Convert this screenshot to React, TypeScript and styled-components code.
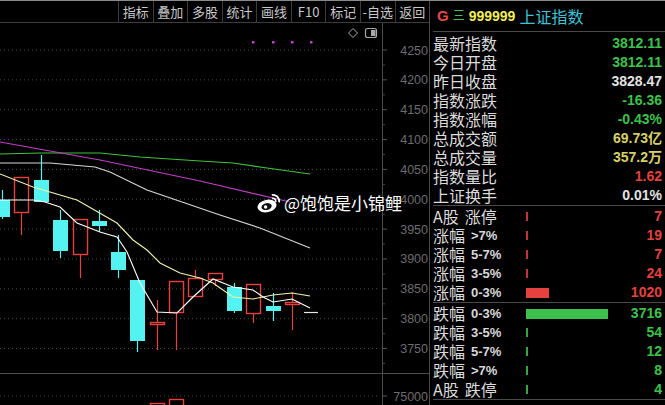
import React from 'react';
import styled, { createGlobalStyle } from 'styled-components';

const GlobalStyle = createGlobalStyle`
  html, body {
    margin: 0;
    padding: 0;
    background: #000;
  }
  body {
    font-family: "Noto Sans CJK SC", "Liberation Sans", sans-serif;
  }
`;

const Screen = styled.div`
  width: 665px;
  height: 405px;
  display: flex;
  background: #000;
  border-top: 1px solid #8a8a8a;
  box-sizing: border-box;
  overflow: hidden;
`;

const LeftPane = styled.div`
  width: 429px;
  display: flex;
  flex-direction: column;
`;

const Toolbar = styled.div`
  height: 22px;
  display: flex;
  justify-content: flex-end;
  border-bottom: 1px solid #3c3c3c;
  box-sizing: border-box;
`;

const ToolGroup = styled.div`
  width: 311px;
  display: flex;
`;

const ToolButton = styled.div`
  flex: 1;
  display: flex;
  align-items: center;
  justify-content: center;
  border-left: 1px solid #3c3c3c;
  color: #c8c8c8;
  font-size: 13px;
  line-height: 21px;
  white-space: nowrap;
`;

const ChartArea = styled.div`
  position: relative;
  flex: 1;
`;

const Watermark = styled.div`
  position: absolute;
  left: 257px;
  top: 169px;
  display: flex;
  align-items: center;
  gap: 3px;
  color: #fff;
  font-size: 17px;
  line-height: 22px;
  text-shadow: 0 0 2px #000;
`;

const RightPane = styled.div`
  flex: 1;
  border-left: 1px solid #4a4a4a;
  padding-left: 3px;
  display: flex;
  flex-direction: column;
`;

const Header = styled.div`
  height: 30px;
  border-bottom: 1px solid #4a4a4a;
  display: flex;
  align-items: center;
  padding-left: 4px;
  gap: 4px;
`;

const HeaderMark = styled.span<{ color: string; size: number; bold?: boolean }>`
  color: ${p => p.color};
  font-size: ${p => p.size}px;
  font-weight: ${p => (p.bold ? 700 : 400)};
  font-family: "Liberation Sans", "Noto Sans CJK SC", sans-serif;
  line-height: 20px;
`;

const HeaderName = styled.span`
  color: #3ec2d6;
  font-size: 16px;
  line-height: 20px;
`;

const Section = styled.div<{ top: number }>`
  padding-top: ${p => p.top}px;
  border-bottom: 1px solid #4a4a4a;
`;

const StatRow = styled.div`
  height: 19px;
  display: flex;
  align-items: center;
  justify-content: space-between;
  padding-right: 3px;
`;

const Label = styled.span`
  color: #dcdcdc;
  font-size: 16px;
  line-height: 19px;
  white-space: nowrap;
`;

const LabelGroup = styled.div`
  height: 19px;
  display: flex;
  align-items: center;
  gap: 6px;
`;

const Latin = styled.span`
  font-family: "Liberation Sans", sans-serif;
  font-weight: 700;
  font-size: 13px;
  line-height: 19px;
  color: #d8d8d8;
`;

const Value = styled.span<{ color: string }>`
  color: ${p => p.color};
  font-family: "Liberation Sans", "Noto Sans CJK SC", sans-serif;
  font-weight: 700;
  font-size: 14px;
  line-height: 19px;
  white-space: nowrap;
`;

const BreadthRow = styled.div`
  height: 19px;
  display: grid;
  grid-template-columns: 93px 1fr auto;
  grid-template-rows: 19px;
  align-items: center;
  padding-right: 3px;
`;

const Bar = styled.div<{ color: string }>`
  height: 10px;
  background: ${p => p.color};
`;

const Tick = styled.div<{ color: string }>`
  width: 1.5px;
  height: 9px;
  background: ${p => p.color};
  opacity: 0.85;
`;

const RED = '#e4413f';
const GREEN = '#3cc24c';
const WHITE = '#e2e2e2';
const YELLOW = '#d6cf6a';

const tools = ['指标', '叠加', '多股', '统计', '画线', 'F10', '标记', '-自选', '返回'];

const stats = [
  { label: '最新指数', value: '3812.11', color: GREEN },
  { label: '今日开盘', value: '3812.11', color: GREEN },
  { label: '昨日收盘', value: '3828.47', color: WHITE },
  { label: '指数涨跌', value: '-16.36', color: GREEN },
  { label: '指数涨幅', value: '-0.43%', color: GREEN },
  { label: '总成交额', value: '69.73亿', color: YELLOW },
  { label: '总成交量', value: '357.2万', color: YELLOW },
  { label: '指数量比', value: '1.62', color: RED },
  { label: '上证换手', value: '0.01%', color: WHITE },
];

const ups = [
  { head: 'A股', tail: '涨停', latin: false, value: 7 },
  { head: '涨幅', tail: '>7%', latin: true, value: 19 },
  { head: '涨幅', tail: '5-7%', latin: true, value: 7 },
  { head: '涨幅', tail: '3-5%', latin: true, value: 24 },
  { head: '涨幅', tail: '0-3%', latin: true, value: 1020 },
];

const downs = [
  { head: '跌幅', tail: '0-3%', latin: true, value: 3716 },
  { head: '跌幅', tail: '3-5%', latin: true, value: 54 },
  { head: '跌幅', tail: '5-7%', latin: true, value: 12 },
  { head: '跌幅', tail: '>7%', latin: true, value: 8 },
  { head: 'A股', tail: '跌停', latin: false, value: 4 },
];

const MAX_COUNT = 3716;
const BAR_MAX = 82;

// kind, left, bodyTop, bodyBottom, wickTop, wickBottom (page coords)
type Candle = [string, number, number, number, number, number];
const candles: Candle[] = [
  ['c', -5, 200, 217, 190, 219],
  ['r', 14, 177, 213, 177, 235],
  ['c', 34, 180, 202, 155, 202],
  ['c', 53, 220, 251, 210, 258],
  ['r', 73, 219, 255, 219, 278],
  ['c', 92, 221, 226, 210, 232],
  ['c', 111, 252, 270, 235, 278],
  ['c', 130, 280, 341, 280, 352],
  ['r', 150, 322, 325, 300, 350],
  ['r', 169, 281, 313, 281, 350],
  ['r', 188, 278, 297, 270, 297],
  ['r', 208, 273, 280, 273, 286],
  ['c', 227, 287, 311, 283, 313],
  ['r', 246, 284, 314, 284, 323],
  ['c', 266, 306, 311, 293, 321],
  ['r', 285, 302, 305, 292, 330],
];

const maLines = [
  { color: '#3fc23f', pts: '0,154 40,153 100,153 140,157 200,161 233,163 267,168 310,174' },
  { color: '#c23fc6', pts: '0,142 100,160 200,181 290,202' },
  { color: '#d6d6d6', pts: '0,163 50,163 95,167 110,172 147,190 220,215 260,228 310,248' },
  {
    color: '#f2f2b0',
    pts: '0,174 33,187 77,200 117,223 133,240 147,250 160,263 180,273 200,278 213,283 233,297 253,299 273,295 292,293 310,296',
  },
  {
    color: '#ffffff',
    pts: '0,200 33,200 45,202 60,207 77,223 100,232 117,237 127,252 140,283 157,312 177,313 193,297 213,279 233,287 253,290 263,297 273,302 292,299 310,308',
  },
];

const priceY = (p: number) => 50 + (4250 - p) * 0.597;
const prices = [4250, 4200, 4150, 4100, 4050, 4000, 3950, 3900, 3850, 3800, 3750];

function CandleMark({ c }: { c: Candle }) {
  const [kind, left, bt, bb, wt, wb] = c;
  const w = 14;
  const cx = left + w / 2 + 0.5;
  if (kind === 'c') {
    return (
      <g>
        <line x1={cx} y1={wt} x2={cx} y2={wb} stroke="#55f2f2" strokeWidth={1.2} />
        <rect x={left} y={bt} width={w + 1} height={Math.max(bb - bt, 2)} fill="#55f2f2" />
      </g>
    );
  }
  return (
    <g>
      {wt < bt && <line x1={cx} y1={wt} x2={cx} y2={bt} stroke={RED} strokeWidth={1.2} />}
      {wb > bb && <line x1={cx} y1={bb} x2={cx} y2={wb} stroke={RED} strokeWidth={1.2} />}
      <rect x={left + 0.5} y={bt + 0.5} width={w} height={Math.max(bb - bt - 1, 1.5)} fill="none" stroke={RED} strokeWidth={1.4} />
    </g>
  );
}

function KChart() {
  return (
    <svg width={429} height={382} viewBox="0 23 429 382" style={{ display: 'block' }}>
      {prices.map(p => (
        <line key={p} x1={0} y1={priceY(p)} x2={380} y2={priceY(p)} stroke="#4a4a4a" strokeDasharray="1 3" />
      ))}
      <line x1={0} y1={396} x2={380} y2={396} stroke="#4a4a4a" strokeDasharray="1 3" />
      <line x1={0} y1={373.5} x2={429} y2={373.5} stroke="#4c4c4c" />
      <line x1={382.5} y1={23} x2={382.5} y2={405} stroke="#4c4c4c" />
      {prices.map(p => (
        <g key={'t' + p}>
          <line x1={382} y1={priceY(p)} x2={387} y2={priceY(p)} stroke="#555" />
          <line x1={382} y1={priceY(p) + 15} x2={385} y2={priceY(p) + 15} stroke="#444" />
          <text
            x={428}
            y={priceY(p) + 4.5}
            textAnchor="end"
            fill="#6c6c6c"
            fontSize={12.5}
            fontFamily="Liberation Sans, sans-serif"
          >
            {p}
          </text>
        </g>
      ))}
      <line x1={382} y1={396} x2={387} y2={396} stroke="#555" />
      <text x={428} y={400.5} textAnchor="end" fill="#6c6c6c" fontSize={12.5} fontFamily="Liberation Sans, sans-serif">
        75000
      </text>

      {maLines.slice(0, 3).map(m => (
        <polyline key={m.color} points={m.pts} fill="none" stroke={m.color} strokeWidth={1.1} />
      ))}
      {candles.map((c, i) => (
        <CandleMark key={i} c={c} />
      ))}
      {maLines.slice(3).map(m => (
        <polyline key={m.color} points={m.pts} fill="none" stroke={m.color} strokeWidth={1.1} />
      ))}
      <line x1={304} y1={312.5} x2={318} y2={312.5} stroke="#e8e8e8" strokeWidth={1.2} />

      <rect x={150.5} y={403.5} width={14} height={6} fill="none" stroke={RED} strokeWidth={1.4} />
      <rect x={169.5} y={399.5} width={14} height={10} fill="none" stroke={RED} strokeWidth={1.4} />

      {[252, 272, 291, 310].map(x => (
        <rect key={x} x={x} y={41} width={2.5} height={2.5} fill="#c43ccc" />
      ))}

      <path d="M353 28.5 L357.5 33 L353 37.5 L348.5 33 Z" fill="none" stroke="#aaa" strokeWidth={1} />
      <rect x={365.5} y={28.5} width={11} height={9} rx={2} fill="none" stroke="#aaa" strokeWidth={1.2} />
      <rect x={371} y={30} width={4.5} height={6} fill="#aaa" />
    </svg>
  );
}

function WeiboLogo() {
  return (
    <svg width={24} height={20} viewBox="0 0 24 20">
      <ellipse cx={10} cy={13} rx={9.6} ry={6.2} fill="#fff" transform="rotate(-12 10 13)" />
      <ellipse cx={9.6} cy={13.6} rx={5.2} ry={3.4} fill="#111" transform="rotate(-12 9.6 13.6)" />
      <circle cx={8.6} cy={14} r={1.7} fill="#fff" />
      <path d="M15.5 1.8 A6.5 6.5 0 0 1 22.2 8.6" fill="none" stroke="#fff" strokeWidth={1.8} strokeLinecap="round" />
      <path d="M15.6 5.2 A3.2 3.2 0 0 1 18.8 8.4" fill="none" stroke="#fff" strokeWidth={1.6} strokeLinecap="round" />
    </svg>
  );
}

function BreadthLabel({ head, tail, latin }: { head: string; tail: string; latin: boolean }) {
  return (
    <LabelGroup>
      <Label>{head}</Label>
      {latin ? <Latin>{tail}</Latin> : <Label>{tail}</Label>}
    </LabelGroup>
  );
}

function BreadthSection({ rows, color }: { rows: typeof ups; color: string }) {
  return (
    <Section top={1}>
      {rows.map((r, i) => {
        const w = (r.value / MAX_COUNT) * BAR_MAX;
        return (
          <BreadthRow key={i}>
            <BreadthLabel head={r.head} tail={r.tail} latin={r.latin} />
            <div>{w > 4 ? <Bar color={color} style={{ width: w }} /> : <Tick color={color} />}</div>
            <Value color={color}>{r.value}</Value>
          </BreadthRow>
        );
      })}
    </Section>
  );
}

export default function App() {
  return (
    <>
      <GlobalStyle />
      <Screen>
        <LeftPane>
          <Toolbar>
            <ToolGroup>
              {tools.map(t => (
                <ToolButton key={t}>{t}</ToolButton>
              ))}
            </ToolGroup>
          </Toolbar>
          <ChartArea>
            <KChart />
            <Watermark>
              <WeiboLogo />
              <span>@饱饱是小锦鲤</span>
            </Watermark>
          </ChartArea>
        </LeftPane>
        <RightPane>
          <Header>
            <HeaderMark color="#e5484a" size={15} bold>
              G
            </HeaderMark>
            <HeaderMark color="#4fbf5c" size={12}>
              三
            </HeaderMark>
            <HeaderMark color="#f2ee5a" size={14} bold>
              999999
            </HeaderMark>
            <HeaderName>上证指数</HeaderName>
          </Header>
          <Section top={2}>
            {stats.map(s => (
              <StatRow key={s.label}>
                <Label>{s.label}</Label>
                <Value color={s.color}>{s.value}</Value>
              </StatRow>
            ))}
          </Section>
          <BreadthSection rows={ups} color={RED} />
          <BreadthSection rows={downs} color={GREEN} />
        </RightPane>
      </Screen>
    </>
  );
}
